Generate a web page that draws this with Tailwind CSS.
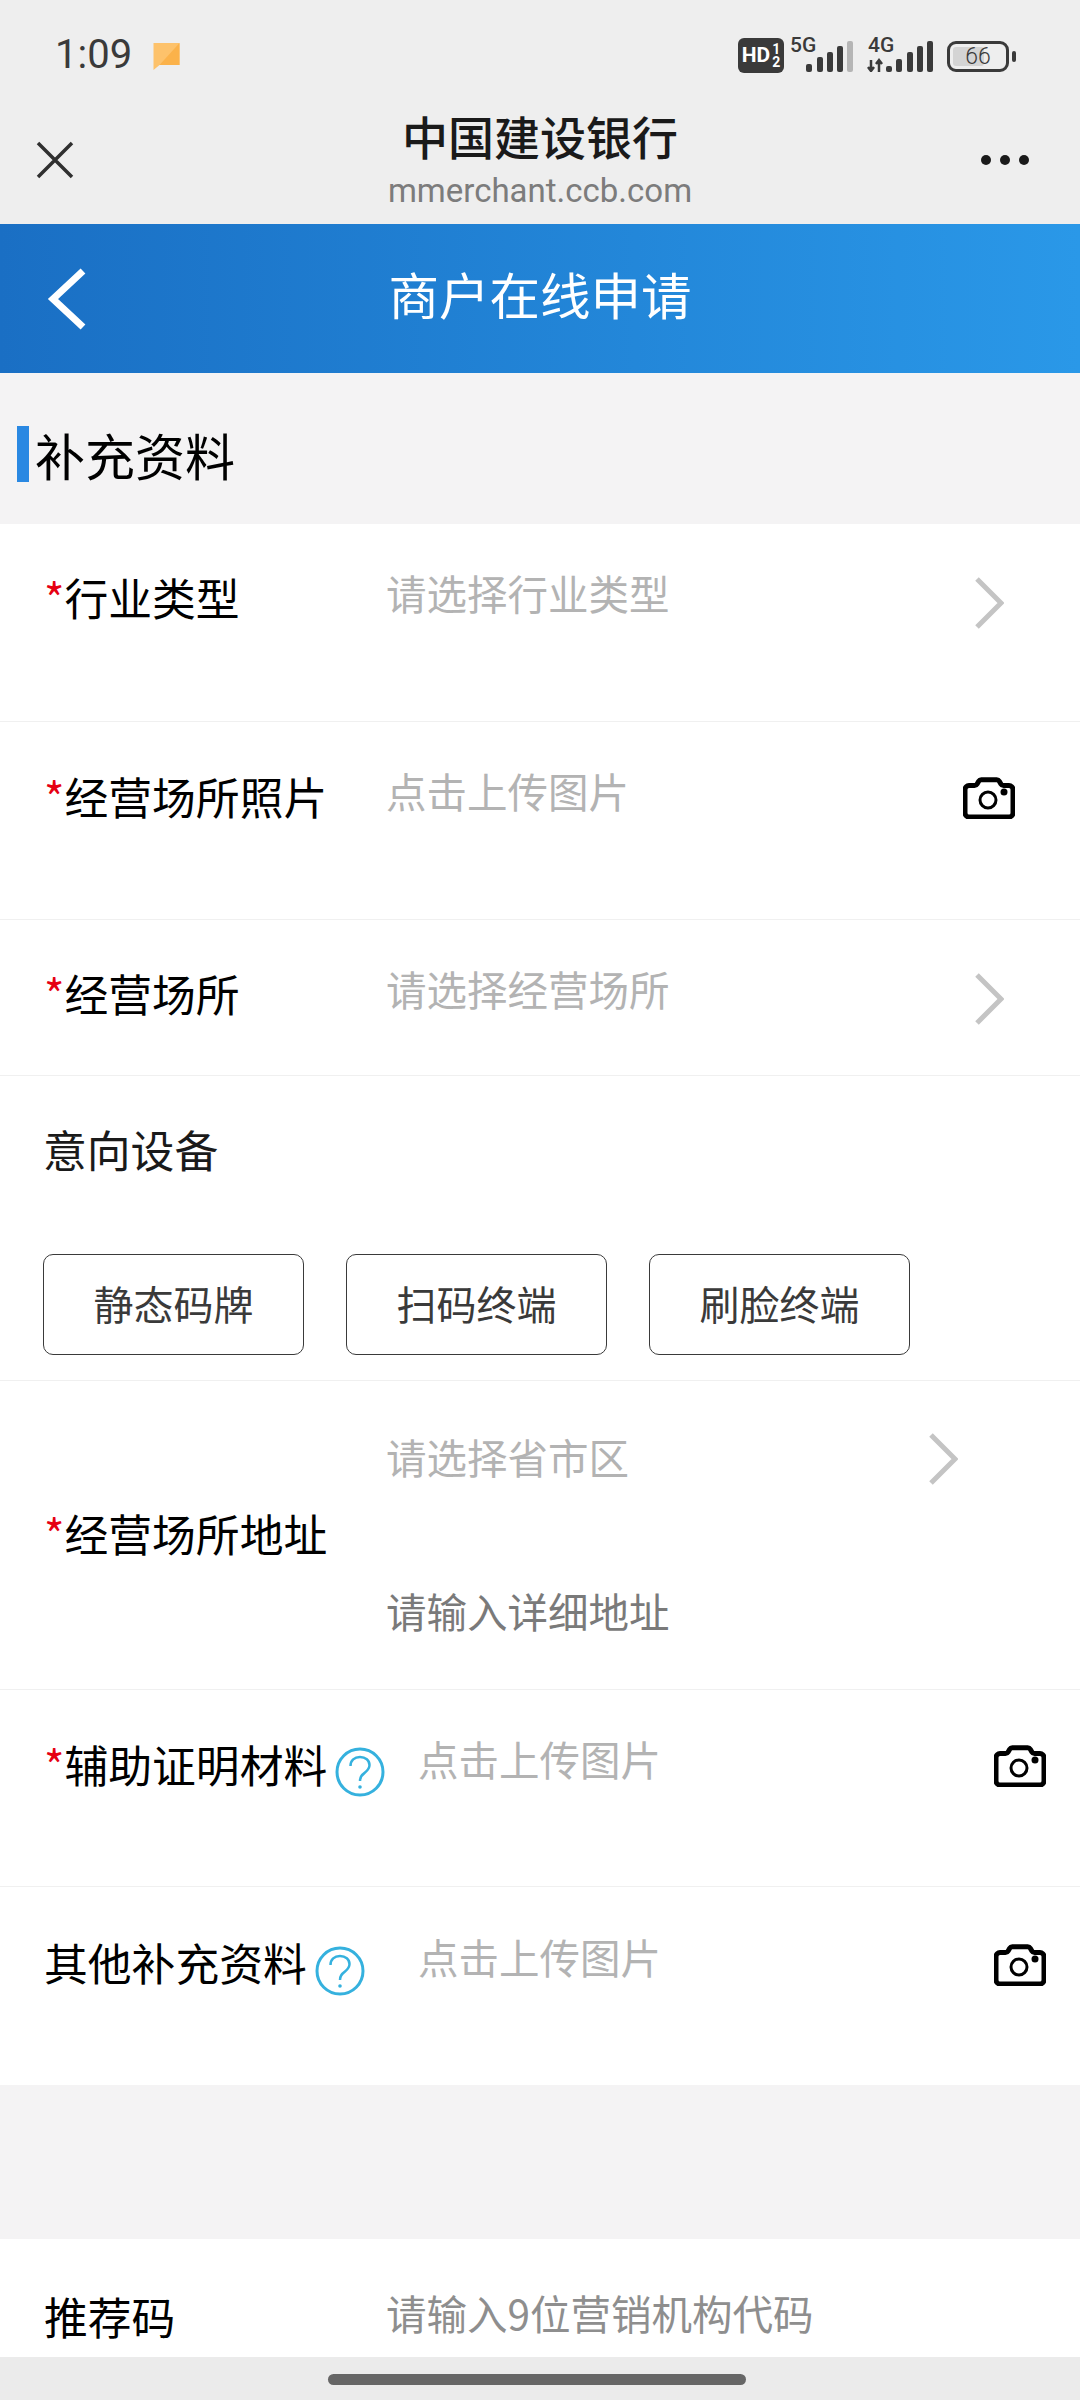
<!DOCTYPE html>
<html lang="zh-CN">
<head>
<meta charset="utf-8">
<script src="https://cdn.jsdelivr.net/npm/@tailwindcss/browser@4"></script>
</head>
<body class="m-0 bg-[#f4f3f4]">
<svg width="0" height="0" class="absolute">
  <defs>
    <symbol id="cam" viewBox="0 0 52 42"><path d="M6 8.500h5.500a3 3 0 0 0 2.600-1.500l1.600-2.800a3 3 0 0 1 2.600-1.500h15.400a3 3 0 0 1 2.600 1.500l1.600 2.800a3 3 0 0 0 2.600 1.500H46a4 4 0 0 1 4 4V36a4 4 0 0 1-4 4H6a4 4 0 0 1-4-4V12.500a4 4 0 0 1 4-4z" fill="none" stroke="#000" stroke-width="5"/><circle cx="25" cy="23" r="8" fill="none" stroke="#000" stroke-width="3"/><circle cx="41" cy="15" r="3.500" fill="#000"/></symbol>
    <symbol id="chev" viewBox="0 0 30 54"><path d="M3 3l24 24L3 51" fill="none" stroke="#c4c4c4" stroke-width="5"/></symbol>
    <symbol id="help" viewBox="0 0 50 50"><circle cx="25" cy="25" r="23" fill="none" stroke="#35b1de" stroke-width="3"/><path d="M15.500 19c0-5.500 4-9 9.500-9s9.500 3.500 9.500 8c0 3.500-2 5.500-4.500 7.500-3 2.300-5 4-5 8.500" fill="none" stroke="#35b1de" stroke-width="2.500"/><circle cx="25" cy="40" r="1.800" fill="#35b1de"/></symbol>
  </defs>
</svg>
<div class="w-[1080px] h-[2400px] overflow-hidden flex flex-col bg-[#f4f3f4] font-['Noto_Sans_CJK_SC','Noto_Sans',sans-serif]">
  <!-- browser chrome -->
  <div class="h-[224px] bg-[#eeeeee] flex flex-col shrink-0">
    <div class="h-[104px] flex items-start justify-between pt-[34px] pl-[55px] pr-[64px]">
      <div class="flex items-center gap-[21px]">
        <span class="text-[40px] leading-[42px] text-[#3a3a3a] font-['Roboto',sans-serif]">1:09</span>
        <svg width="27" height="30" viewBox="0 0 26 30"><path d="M0 3h26v22H6l-6 5z" fill="#fdc26b"/><path d="M6 25L26 3v22z" fill="#fbb24a"/></svg>
      </div>
      <div class="flex items-start pt-[4px]">
        <div class="w-[46px] h-[35px] rounded-[6px] bg-[#3a3a3a] text-white flex items-center justify-center gap-[2px] font-['Roboto',sans-serif] font-bold"><span class="text-[21px] leading-none">HD</span><span class="flex flex-col items-center text-[14px] leading-[13px]"><span>1</span><span>2</span></span></div>
        <div class="relative ml-[6px] w-[63px] h-[34px]">
          <span class="absolute left-0 -top-[3px] text-[21px] leading-[21px] font-medium text-[#3a3a3a] font-['Roboto',sans-serif]">5G</span>
          <svg class="absolute left-[16px] top-[3px]" width="47" height="31" viewBox="0 0 47 31"><rect x="0" y="23" width="6" height="8" rx="2" fill="#3a3a3a"/><rect x="11" y="16" width="6" height="15" rx="2" fill="#3a3a3a"/><rect x="21" y="11" width="6" height="20" rx="2" fill="#3a3a3a"/><rect x="31" y="5" width="6" height="26" rx="2" fill="#3a3a3a"/><rect x="41" y="0" width="6" height="31" rx="2" fill="#b5b5b5"/></svg>
        </div>
        <div class="relative ml-[14px] w-[66px] h-[34px]">
          <span class="absolute left-[1px] -top-[3px] text-[21px] leading-[21px] font-medium text-[#3a3a3a] font-['Roboto',sans-serif]">4G</span>
          <svg class="absolute left-0 top-[3px]" width="66" height="31" viewBox="0 0 66 31"><path d="M4 19v11M1 26l3 4 3-4M12 31V19M9 23l3-4 3 4" stroke="#3a3a3a" stroke-width="2.500" fill="none"/><rect x="19" y="25" width="6" height="6" rx="2" fill="#3a3a3a"/><rect x="29" y="18" width="6" height="13" rx="2" fill="#3a3a3a"/><rect x="40" y="11" width="6" height="20" rx="2" fill="#3a3a3a"/><rect x="50" y="5" width="6" height="26" rx="2" fill="#3a3a3a"/><rect x="60" y="0" width="6" height="31" rx="2" fill="#3a3a3a"/></svg>
        </div>
        <div class="ml-[14px] flex items-center gap-[3px] mt-[3px]">
          <div class="relative w-[62px] h-[31px] rounded-[9px] border-[3px] border-[#3a3a3a] overflow-hidden">
            <div class="absolute left-[3px] top-[3px] bottom-[3px] w-[31px] rounded-[3px] bg-[#d4d4d4]"></div>
            <span class="absolute inset-0 flex items-center justify-center text-[23px] leading-none font-light text-[#3a3a3a] font-['Roboto',sans-serif]">66</span>
          </div>
          <div class="w-[4px] h-[11px] rounded-[2px] bg-[#3a3a3a]"></div>
        </div>
      </div>
    </div>
    <div class="relative flex-1">
      <svg class="absolute left-[36px] top-[37px]" width="38" height="38" viewBox="0 0 38 38"><path d="M2 2l34 34M36 2L2 36" stroke="#2f2f2f" stroke-width="3.500" fill="none"/></svg>
      <div class="absolute left-0 right-0 top-[4px] text-center text-[46px] leading-[54px] font-medium text-[#1a1a1a]">中国建设银行</div>
      <div class="absolute left-0 right-0 top-[67px] text-center text-[33px] leading-[40px] text-[#7c7c7c] font-['Roboto',sans-serif]">mmerchant.ccb.com</div>
      <div class="absolute right-[51px] top-[51px] flex gap-[9px]"><i class="block w-[10px] h-[10px] rounded-full bg-[#1a1a1a]"></i><i class="block w-[10px] h-[10px] rounded-full bg-[#1a1a1a]"></i><i class="block w-[10px] h-[10px] rounded-full bg-[#1a1a1a]"></i></div>
    </div>
  </div>
  <!-- blue bar -->
  <div class="relative h-[149px] shrink-0 bg-gradient-to-r from-[#1a6fc4] to-[#2a98e8] flex items-center justify-center text-white text-[50.500px] pb-[9px]">
    <svg class="absolute left-[47px] top-[44px]" width="40" height="62" viewBox="0 0 40 62"><path d="M36 3L6 31l30 28" fill="none" stroke="#fff" stroke-width="7"/></svg>
    <span>商户在线申请</span>
  </div>
  <!-- section title -->
  <div class="h-[151px] shrink-0 flex items-center pl-[17px] pt-[10px]">
    <div class="w-[12px] h-[56px] bg-[#2a88e2]"></div>
    <span class="ml-[6px] text-[50px] leading-[60px] text-black">补充资料</span>
  </div>
  <!-- form -->
  <div class="bg-white shrink-0">
    <div class="relative h-[198px] border-b border-[#f0f0f0] pl-[44px] pt-[45px] flex">
      <div class="w-[342px] text-[43.800px] leading-[56px] text-black"><span class="text-[#e60012]">*</span>行业类型</div>
      <div class="text-[40.500px] leading-[50px] -mt-[1px] text-[#b3b3b3]">请选择行业类型</div>
      <svg class="absolute left-[974px] top-[52px]" width="30" height="54"><use href="#chev"/></svg>
    </div>
    <div class="relative h-[198px] border-b border-[#f0f0f0] pl-[44px] pt-[46px] flex">
      <div class="w-[342px] text-[43.800px] leading-[56px] text-black"><span class="text-[#e60012]">*</span>经营场所照片</div>
      <div class="text-[40.500px] leading-[50px] -mt-[2px] text-[#b3b3b3]">点击上传图片</div>
      <svg class="absolute left-[963px] top-[55px]" width="52" height="42"><use href="#cam"/></svg>
    </div>
    <div class="relative h-[156px] border-b border-[#f0f0f0] pl-[44px] pt-[45px] flex">
      <div class="w-[342px] text-[43.800px] leading-[56px] text-black"><span class="text-[#e60012]">*</span>经营场所</div>
      <div class="text-[40.500px] leading-[50px] -mt-[1px] text-[#b3b3b3]">请选择经营场所</div>
      <svg class="absolute left-[974px] top-[52px]" width="30" height="54"><use href="#chev"/></svg>
    </div>
    <div class="h-[305px] border-b border-[#f0f0f0] pt-[45px]">
      <div class="pl-[43px] text-[43.800px] leading-[56px] text-[#1a1a1a]">意向设备</div>
      <div class="mt-[77px] pl-[43px] flex gap-[42px]">
        <div class="w-[261px] h-[101px] rounded-[10px] border border-[#3a3a3a] flex items-center justify-center pb-[4px] text-[40px] text-[#3a3a3a]">静态码牌</div>
        <div class="w-[261px] h-[101px] rounded-[10px] border border-[#3a3a3a] flex items-center justify-center pb-[4px] text-[40px] text-[#3a3a3a]">扫码终端</div>
        <div class="w-[261px] h-[101px] rounded-[10px] border border-[#3a3a3a] flex items-center justify-center pb-[4px] text-[40px] text-[#3a3a3a]">刷脸终端</div>
      </div>
    </div>
    <div class="relative h-[309px] border-b border-[#f0f0f0] pl-[44px] flex items-center">
      <div class="w-[342px] text-[43.800px] leading-[56px] -mt-[4px] text-black"><span class="text-[#e60012]">*</span>经营场所地址</div>
      <div class="h-full flex flex-col pt-[51px]">
        <div class="text-[40.500px] leading-[50px] text-[#b3b3b3]">请选择省市区</div>
        <div class="mt-[104px] text-[40.500px] leading-[50px] text-[#7a7a7a]">请输入详细地址</div>
      </div>
      <svg class="absolute left-[928px] top-[51px]" width="30" height="54"><use href="#chev"/></svg>
    </div>
    <div class="relative h-[197px] border-b border-[#f0f0f0] pl-[44px] pt-[46px] flex">
      <div class="text-[43.800px] leading-[56px] text-black"><span class="text-[#e60012]">*</span>辅助证明材料</div>
      <svg class="absolute left-[335px] top-[57px]" width="50" height="50"><use href="#help"/></svg>
      <div class="absolute left-[418px] top-[44px] text-[40.500px] leading-[50px] text-[#b3b3b3]">点击上传图片</div>
      <svg class="absolute left-[994px] top-[55px]" width="52" height="42"><use href="#cam"/></svg>
    </div>
    <div class="relative h-[198px] pl-[44px] pt-[47px] flex">
      <div class="text-[43.800px] leading-[56px] text-black">其他补充资料</div>
      <svg class="absolute left-[315px] top-[59px]" width="50" height="50"><use href="#help"/></svg>
      <div class="absolute left-[418px] top-[45px] text-[40.500px] leading-[50px] text-[#b3b3b3]">点击上传图片</div>
      <svg class="absolute left-[994px] top-[57px]" width="52" height="42"><use href="#cam"/></svg>
    </div>
  </div>
  <div class="h-[154px] shrink-0"></div>
  <div class="h-[118px] shrink-0 bg-white pl-[44px] pt-[49px] flex overflow-hidden">
    <div class="w-[342px] text-[43.800px] leading-[56px] text-black">推荐码</div>
    <div class="text-[40.500px] leading-[50px] text-[#8e8e8e]">请输入9位营销机构代码</div>
  </div>
  <div class="flex-1 bg-[#ebebeb] flex justify-center pt-[17px]">
    <div class="w-[418px] h-[11px] rounded-full bg-[#666666] -ml-[7px]"></div>
  </div>
</div>
</body>
</html>
